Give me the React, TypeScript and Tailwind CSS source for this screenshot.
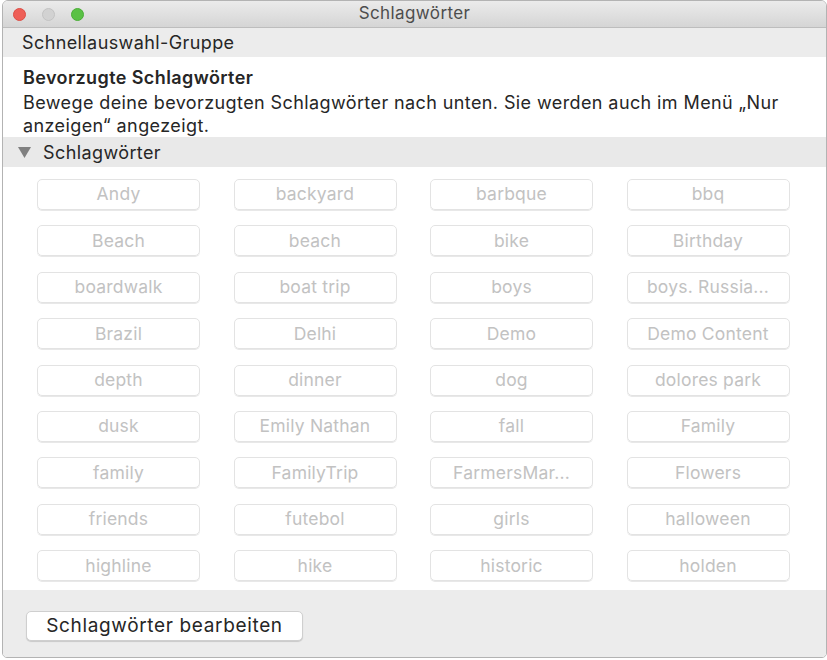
const tags = [
  "Andy", "backyard", "barbque", "bbq",
  "Beach", "beach", "bike", "Birthday",
  "boardwalk", "boat trip", "boys", "boys. Russia...",
  "Brazil", "Delhi", "Demo", "Demo Content",
  "depth", "dinner", "dog", "dolores park",
  "dusk", "Emily Nathan", "fall", "Family",
  "family", "FamilyTrip", "FarmersMar...", "Flowers",
  "friends", "futebol", "girls", "halloween",
  "highline", "hike", "historic", "holden",
];

export default function App() {
  return (
    <div className="w-[827px] h-[660px] bg-white font-['Inter',sans-serif] text-[18px] tracking-[0.4px] text-[#262626]">
      <div className="ml-[2px] w-[825px] h-[658px] border border-[#b3b3b3] rounded-t-[6px] rounded-b-[5px] overflow-hidden flex flex-col">
        {/* title bar */}
        <div className="relative h-[27px] flex items-center justify-center bg-gradient-to-b from-[#ebebeb] to-[#d5d5d5] border-b border-[#bdbdbd]">
          <div className="absolute left-[10px] top-[7px] flex gap-[16px]">
            <span className="w-[13px] h-[13px] rounded-full bg-[#ee5f57] border border-[#dd4d45]" />
            <span className="w-[13px] h-[13px] rounded-full bg-[#d2d2d2] border border-[#c3c3c3]" />
            <span className="w-[13px] h-[13px] rounded-full bg-[#5ac145] border border-[#4aae37]" />
          </div>
          <span className="text-[17px] tracking-[0.4px] text-[#4d4d4d]">Schlagwörter</span>
        </div>

        <div className="h-[29px] bg-[#ececec] pl-[19px] flex items-center">Schnellauswahl-Gruppe</div>

        <div className="h-[80px] bg-white pl-[20px] pr-[30px] pt-[9px] leading-[23px]">
          <div className="font-semibold">Bevorzugte Schlagwörter</div>
          <div className="mt-[2px]">Bewege deine bevorzugten Schlagwörter nach unten. Sie werden auch im Menü „Nur anzeigen“ angezeigt.</div>
        </div>

        <div className="h-[30px] bg-[#e9e9e9] flex items-center pl-[15px] gap-[12px]">
          <svg width="13" height="11" viewBox="0 0 13 11">
            <path d="M0 0 H13 L6.5 11 Z" fill="#808080" />
          </svg>
          <span>Schlagwörter</span>
        </div>

        <div className="h-[423px] bg-white pt-[12px] pl-[34px]">
          <div className="grid grid-cols-[repeat(4,163px)] gap-x-[33.5px] gap-y-[15.4px]">
            {tags.map((t, i) => (
              <div
                key={i}
                className="h-[31px] rounded-[5px] border border-[#e3e3e3] shadow-[0_1px_0_#e8e8e8] flex items-center justify-center text-[17.5px] tracking-[0.2px] text-[#c2c2c2]"
              >
                {t}
              </div>
            ))}
          </div>
        </div>

        <div className="flex-1 bg-[#ececec] pt-[21px] pl-[23px]">
          <button
            type="button"
            className="w-[277px] h-[30px] bg-white rounded-[5px] border border-[#cfcfcf] shadow-[0_1px_1px_rgba(0,0,0,0.15)] text-[19px] tracking-[0.65px] text-[#262626]"
          >
            Schlagwörter bearbeiten
          </button>
        </div>
      </div>
    </div>
  );
}
